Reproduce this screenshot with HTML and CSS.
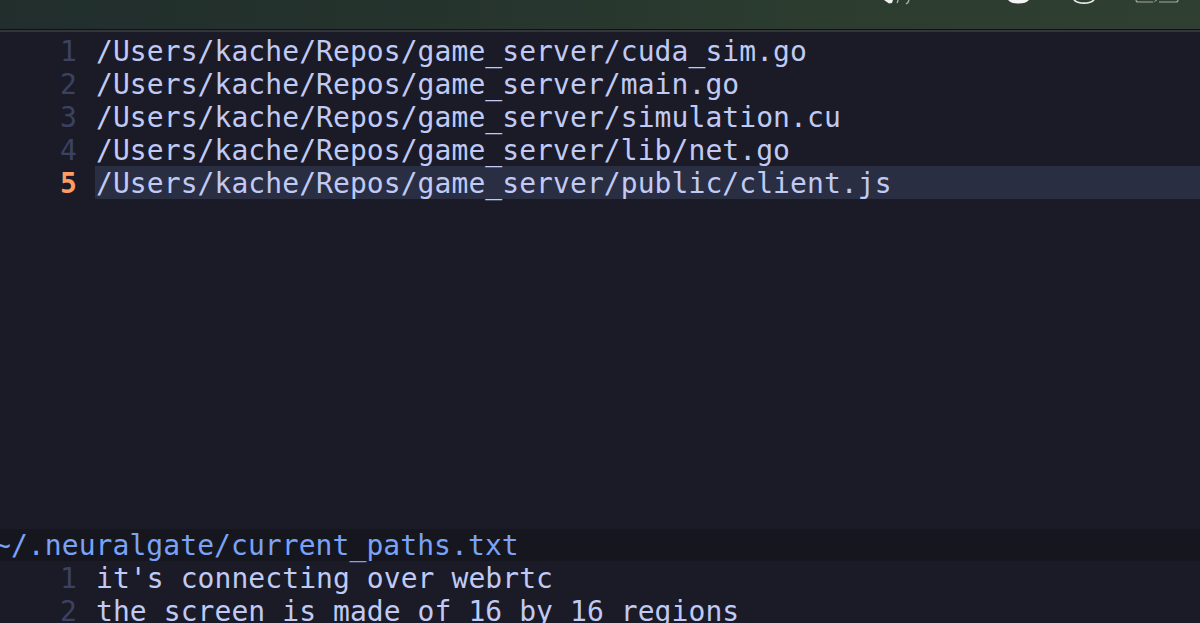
FILE: index.html
```html
<!DOCTYPE html>
<html lang="en">
<head>
<meta charset="utf-8">
<title>neuralgate</title>
<link rel="stylesheet" href="styles.css">
</head>
<body>
<header class="desktop-bar">
  <svg class="tray tray-sound" viewBox="0 0 27 5" aria-hidden="true">
    <path d="M1 0 L6 3.5 L9 3 L10 0Z" fill="#eef0ee"/>
    <path d="M15 0 Q15 1.5 14 3 M26 0 Q25.5 2.5 23 4" fill="none" stroke="#aeb5ae" stroke-width="1.3"/>
  </svg>
  <svg class="tray tray-dot" viewBox="0 0 21 5" aria-hidden="true">
    <path d="M0 0 Q3 3.6 10.5 3.6 Q18 3.6 21 0Z" fill="#f4f4f4"/>
  </svg>
  <svg class="tray tray-ring" viewBox="0 0 22 5" aria-hidden="true">
    <path d="M1 0 Q4 3.2 11 3.2 Q18 3.2 21 0" fill="none" stroke="#e8e8e8" stroke-width="1.8"/>
  </svg>
  <svg class="tray tray-box" viewBox="0 0 44 5" aria-hidden="true">
    <path d="M1 0 Q1 2 3 2 H18 M24 2 H41 Q43 2 43 0" fill="none" stroke="#a3a8a3" stroke-width="1.2"/>
    <path d="M18 3 L21 0 H22Z" fill="#e8e8e8"/>
  </svg>
</header>
<main class="editor">
  <section class="pane pane-top">
    <div class="line"><span class="num">1</span><span class="text">/Users/kache/Repos/game_server/cuda_sim.go</span></div>
    <div class="line"><span class="num">2</span><span class="text">/Users/kache/Repos/game_server/main.go</span></div>
    <div class="line"><span class="num">3</span><span class="text">/Users/kache/Repos/game_server/simulation.cu</span></div>
    <div class="line"><span class="num">4</span><span class="text">/Users/kache/Repos/game_server/lib/net.go</span></div>
    <div class="line current"><span class="num">5</span><span class="text">/Users/kache/Repos/game_server/public/client.js</span></div>
  </section>
  <div class="filename">~/.neuralgate/current_paths.txt</div>
  <section class="pane pane-bottom">
    <div class="line"><span class="num">1</span><span class="text">it's connecting over webrtc</span></div>
    <div class="line"><span class="num">2</span><span class="text">the screen is made of 16 by 16 regions</span></div>
  </section>
</main>
</body>
</html>
```
FILE: styles.css
```css
* { box-sizing: border-box; }
html, body { margin: 0; height: 100%; overflow: hidden; background: #1a1b26; }
body { display: flex; flex-direction: column; height: 623px; }

.desktop-bar {
  flex: 0 0 30px;
  display: flex;
  align-items: flex-start;
  padding-left: 883px;
  background: linear-gradient(90deg, #212e2c 0%, #25332d 35%, #2c3d30 70%, #2f4033 100%);
  border-bottom: 1px solid #0e1210;
  overflow: hidden;
}
.tray { display: block; height: 5px; flex: none; }
.tray-sound { width: 27px; }
.tray-dot { width: 21px; margin-left: 98px; }
.tray-ring { width: 22px; margin-left: 44px; }
.tray-box { width: 44px; margin-left: 40px; }

.editor {
  flex: 1;
  min-height: 0;
  display: flex;
  flex-direction: column;
  background: #1a1b26;
  border-top: 2px solid #33353a;
  font-family: "DejaVu Sans Mono", monospace;
  font-size: 28px;
  letter-spacing: 0.07px;
  overflow: hidden;
}
.pane-top { flex: 0 0 497px; padding-top: 2px; }
.pane-bottom { flex: 1; }

.line { display: flex; height: 33px; line-height: 35px; white-space: pre; }
.num { flex: 0 0 95px; height: 33px; padding-right: 18px; text-align: right; color: #3b4261; }
.text { flex: 1; height: 33px; padding-left: 1px; color: #c0caf5; z-index: 1; }
.current .num { color: #ff9e64; font-weight: 700; }
.current .text { background: #292e42; z-index: 0; }

.filename {
  flex: 0 0 32px;
  height: 32px;
  line-height: 34px;
  padding-left: 0;
  text-indent: -6px;
  background: #16161e;
  color: #7aa2f7;
  white-space: pre;
}
```
